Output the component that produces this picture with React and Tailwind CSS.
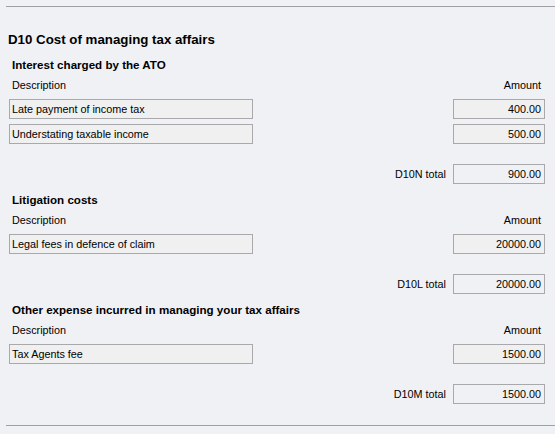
const sections = [
  {
    title: 'Interest charged by the ATO',
    rows: [
      ['Late payment of income tax', '400.00'],
      ['Understating taxable income', '500.00'],
    ],
    totalLabel: 'D10N total',
    total: '900.00',
  },
  {
    title: 'Litigation costs',
    rows: [['Legal fees in defence of claim', '20000.00']],
    totalLabel: 'D10L total',
    total: '20000.00',
  },
  {
    title: 'Other expense incurred in managing your tax affairs',
    rows: [['Tax Agents fee', '1500.00']],
    totalLabel: 'D10M total',
    total: '1500.00',
  },
]

function Section({ section }) {
  return (
    <div className="flex flex-col">
      <div className="h-4 pl-[3px] text-[11.6px] font-bold leading-4">{section.title}</div>
      <div className="mt-1 flex h-4 justify-between pl-[3px] pr-1 leading-4">
        <span>Description</span>
        <span>Amount</span>
      </div>
      <div className="mt-[6px] flex flex-col gap-[5px]">
        {section.rows.map(([desc, amount]) => (
          <div key={desc} className="flex justify-between">
            <div className="flex h-5 w-[244px] items-center border border-[#a9a9ab] bg-[#f0f0f0] px-[2px]">{desc}</div>
            <div className="flex h-5 w-[92px] items-center justify-end border border-[#a9a9ab] bg-[#f0f0f0] pr-[3px]">{amount}</div>
          </div>
        ))}
      </div>
      <div className="mt-5 flex items-center justify-end gap-[7px]">
        <span>{section.totalLabel}</span>
        <div className="flex h-5 w-[92px] items-center justify-end border border-[#a9a9ab] bg-[#f0f1f5] pr-[3px]">{section.total}</div>
      </div>
    </div>
  )
}

export default function App() {
  return (
    <div className="h-[434px] w-[555px] overflow-hidden bg-[#f0f1f5] pt-[6px] text-[10.8px] text-black" style={{ fontFamily: '"Liberation Sans", Arial, sans-serif' }}>
      <div className="ml-[6px] border-t border-[#a0a0a0]" />
      <div className="mt-[25px] h-4 pl-[8px] text-[13.3px] font-bold leading-4">D10 Cost of managing tax affairs</div>
      <div className="mt-[9px] flex w-[545px] flex-col gap-2 pl-[9px]">
        {sections.map((s) => (
          <Section key={s.title} section={s} />
        ))}
      </div>
      <div className="ml-[6px] mt-[21px] border-t border-[#a0a0a0]" />
    </div>
  )
}
